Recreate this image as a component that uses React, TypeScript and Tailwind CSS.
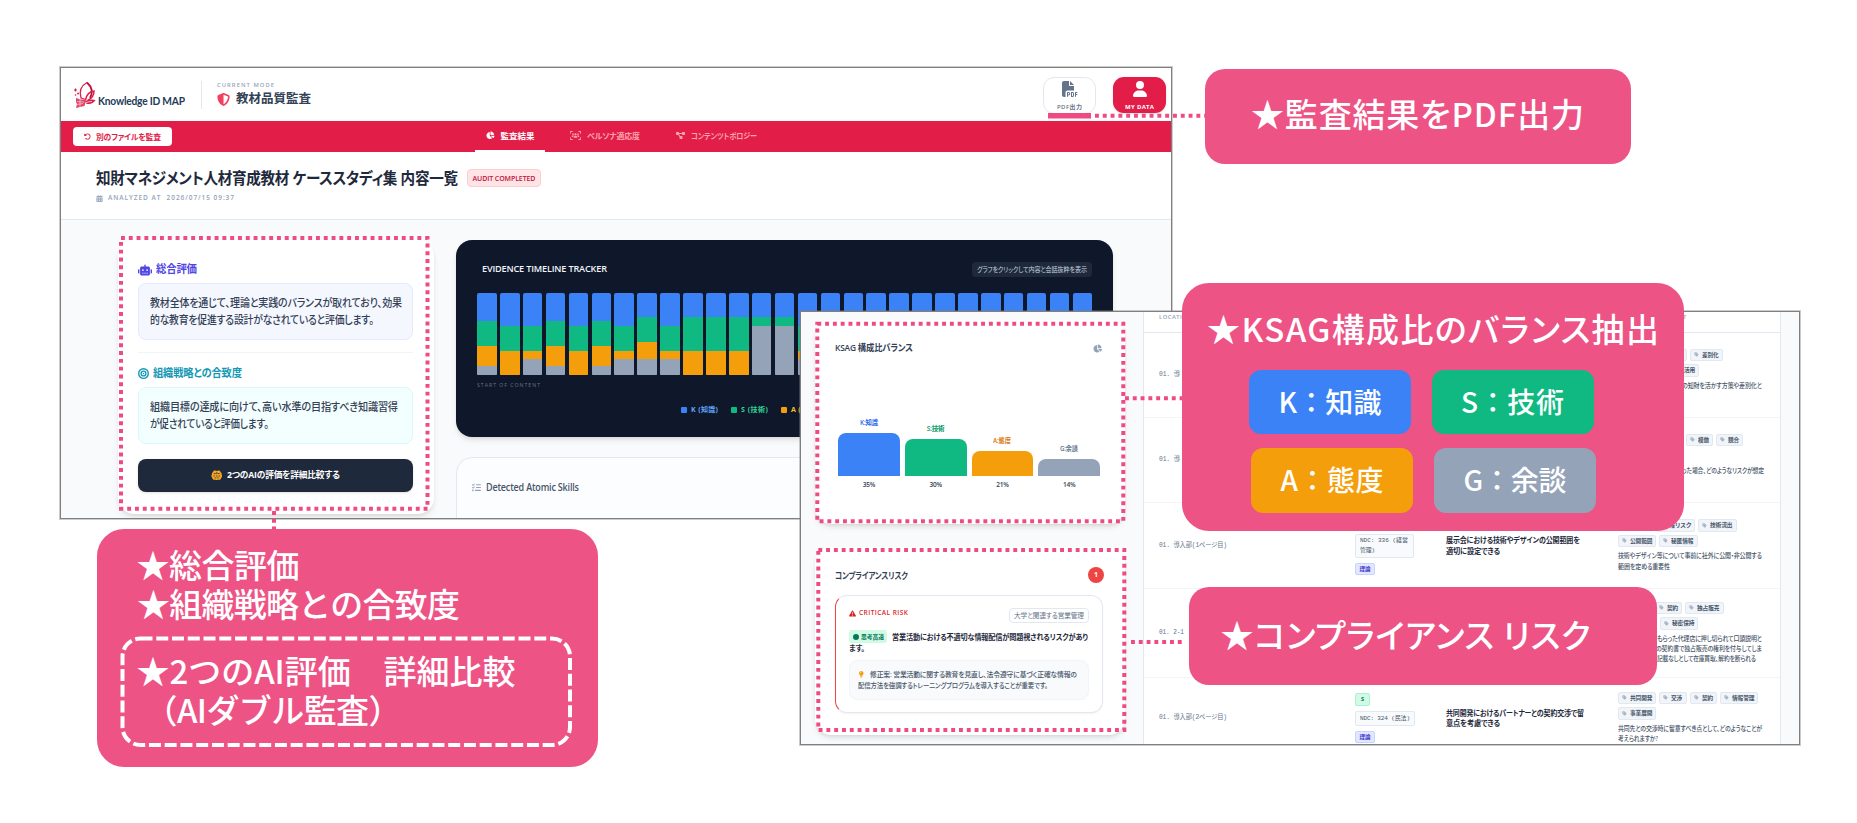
import { useLayoutEffect, useRef, useState } from "react";
import type { ReactNode } from "react";
import {
  FaBullseye,
  FaCalendarDays,
  FaChartPie,
  FaDiagramProject,
  FaFilePdf,
  FaLightbulb,
  FaListCheck,
  FaRobot,
  FaRotateLeft,
  FaShieldHalved,
  FaTag,
  FaTriangleExclamation,
  FaUser,
  FaUsersViewfinder,
} from "react-icons/fa6";

interface FitProps {
  w: number;
  children: string;
  className?: string;
}

// Makes a single line of text span exactly `w` pixels: tracking first,
// then a horizontal squeeze when the tracking would get too tight
const Fit = ({ w, children, className = "" }: FitProps) => {
  const ref = useRef<HTMLSpanElement>(null);
  const [fit, setFit] = useState({ spacing: 0, scale: 1 });

  useLayoutEffect(() => {
    const el = ref.current;
    if (!el) return;
    el.style.letterSpacing = "0px";
    el.style.transform = "none";
    const natural = el.getBoundingClientRect().width;
    const gaps = Math.max(children.length - 1, 1);
    const fontSize = parseFloat(getComputedStyle(el).fontSize);
    const spacing = Math.max((w - natural) / gaps, fontSize * -0.02);
    const scale = Math.min(w / (natural + spacing * gaps), 1);
    el.style.letterSpacing = `${spacing}px`;
    el.style.transform = `scaleX(${scale})`;
    setFit({ spacing, scale });
  }, [w, children]);

  return (
    <span className={`block shrink-0 whitespace-pre ${className}`} style={{ width: w }}>
      <span
        ref={ref}
        className="inline-block origin-left"
        style={{ letterSpacing: fit.spacing, transform: `scaleX(${fit.scale})` }}
      >
        {children}
      </span>
    </span>
  );
};

const Logo = () => (
  <svg viewBox="0 0 24 28" className="h-[28px] w-[24px]" fill="none">
    <path d="M14 1.500C8.500 4.500 6 10 8 17l4.500 1.500" stroke="#d9214e" strokeWidth="1.300" />
    <path d="M14 1.500c5 4.500 6 10 3 15.500" stroke="#b8123c" strokeWidth="1.800" />
    <path d="M12.500 19c1-5 4-8.500 8.500-9 0 4-2 7.500-6.500 9.500" stroke="#e11d48" strokeWidth="1.500" />
    <path d="M12 20c4-1.500 7.500-2 10.500-1-2 3.500-6 5-9.500 3.500" fill="#d9214e" />
    <path d="M12.500 22c2-1 4-1.500 6.500-1.500" stroke="#fff" strokeWidth=".7" />
    <path d="M3 17l5 1.500 5 .5-1.500 6L3 27l1-4-1-2Z" fill="#e2476b" />
    <path d="M4 20.500l7 .5M4 23.500l6-1M7 18v8" stroke="#fff" strokeWidth=".5" />
    <path d="M1 9h3M2.500 7.500v3" stroke="#e11d48" strokeWidth="1.200" />
    <circle cx="5" cy="12.500" r="1" fill="#e11d48" />
    <circle cx="2.500" cy="14" r=".8" fill="#e11d48" />
  </svg>
);

const TwinBrain = ({ className = "" }: { className?: string }) => (
  <svg viewBox="0 0 24 22" className={className} fill="none">
    <path
      d="M9 1C6 .5 4.500 2 4 4.500 1.500 5.500 1.500 8.500 2 9.500 0 11.500.5 15 2.500 16 3 19.500 6 21 9 20.500L12 21l3-.5c3 .5 6-1 6.500-4.500 2-1 2.500-4.500.5-6.500.5-1 .5-4-2-5C19.500 2 18 .5 15 1l-3 1Z"
      fill="currentColor"
    />
    <path d="M6 7.500h4M14 7.500h4M12 4.500v4M5 12.500h3M10.500 12.500h3M16 12.500h3M8 16.500h3M13 16.500h3" stroke="#1e293b" strokeWidth="1.700" />
  </svg>
);

const Header = () => (
  <header className="flex h-[53px] shrink-0 items-start bg-white pl-3">
    <div className="mt-[13px] flex h-[28px] items-start">
      <Logo />
      <Fit w={87} className="mt-[12px] ml-[1px] font-[Lato] text-[11.5px] leading-[16px] font-bold text-[#243a56]">
        Knowledge ID MAP
      </Fit>
      <div className="ml-[16px] h-[28px] w-px bg-[#e2e8f0]" />
    </div>
    <div className="mt-[13px] ml-[15px]">
      <Fit w={57} className="text-[5.8px] leading-[8px] font-semibold text-[#94a3b8]">
        CURRENT MODE
      </Fit>
      <div className="mt-[1px] flex items-center gap-[6px]">
        <FaShieldHalved className="size-[13px] text-[#f43f5e]" />
        <Fit w={75} className="text-[12.5px] leading-[18px] font-bold text-[#334155]">
          教材品質監査
        </Fit>
      </div>
    </div>
    <div className="mt-[9px] mr-[5px] ml-auto flex gap-[17px]">
      <div className="flex h-[37px] w-[53px] flex-col items-center rounded-[11px] border border-[#e2e8f0] pt-[3px]">
        <FaFilePdf className="size-[16px] text-[#64748b]" />
        <Fit w={25} className="mt-[6px] text-[6px] leading-[8px] font-semibold text-[#64748b]">
          PDF出力
        </Fit>
      </div>
      <div className="flex h-[36px] w-[53px] flex-col items-center rounded-[11px] bg-[#e11d48] pt-[4px] shadow-sm">
        <FaUser className="size-[16px] text-white" />
        <Fit w={29} className="mt-[6px] text-[6px] leading-[8px] font-bold text-white">
          MY DATA
        </Fit>
      </div>
    </div>
  </header>
);

const NavBar = () => (
  <nav className="flex h-[31px] shrink-0 items-stretch bg-[#e11d48] pl-[12px] text-[8px] leading-[28px] shadow-sm">
    <div className="mt-[6px] flex h-[19px] w-[99px] items-center rounded bg-white pl-[11px] font-bold text-[#e11d48]">
      <FaRotateLeft className="mr-[5px] size-[7px]" />
      <Fit w={65}>別のファイルを監査</Fit>
    </div>
    <div className="ml-[303px] flex w-[70px] items-center border-b-2 border-white pl-[11px] text-[8.5px] font-bold text-white">
      <FaChartPie className="mr-[6px] size-[8.5px]" />
      <Fit w={34}>監査結果</Fit>
    </div>
    <div className="ml-[25px] flex items-center pb-[2px] font-semibold text-[#fda4af]">
      <FaUsersViewfinder className="mr-[6px] size-[11px]" />
      <Fit w={53}>ペルソナ適応度</Fit>
    </div>
    <div className="ml-[36px] flex items-center pb-[2px] font-semibold text-[#fda4af]">
      <FaDiagramProject className="mr-[6px] size-[9px]" />
      <Fit w={66}>コンテンツトポロジー</Fit>
    </div>
  </nav>
);

const TitleBar = () => (
  <div className="h-[68px] shrink-0 border-b border-[#e2e8f0] bg-white pl-[35px]">
    <div className="flex items-center pt-[15px]">
      <Fit w={362} className="text-[16px] leading-[22px] font-semibold text-[#1e293b]">
        知財マネジメント人材育成教材 ケーススタディ集 内容一覧
      </Fit>
      <div className="ml-[9px] flex h-[18px] w-[74px] items-center justify-center rounded border border-[#fecdd3] bg-[#ffe4e6] text-[#be123c]">
        <Fit w={63} className="text-[7px] leading-none font-semibold">
          AUDIT COMPLETED
        </Fit>
      </div>
    </div>
    <div className="mt-[4px] flex items-center gap-[5px] text-[6.5px] leading-[10px] font-semibold text-[#94a3b8]">
      <FaCalendarDays className="size-[7px]" />
      <Fit w={126}>ANALYZED AT  2026/07/15 09:37</Fit>
    </div>
  </div>
);

const SummaryCard = () => (
  <div className="h-[274px] w-[316px] rounded-2xl bg-white pt-[22px] pr-[21px] pl-[20px] text-[11px] text-[#334155] shadow-md">
    <div className="flex h-[16px] items-center gap-[4px] font-bold text-[#4f46e5]">
      <FaRobot className="size-[14px]" />
      <Fit w={41}>総合評価</Fit>
    </div>
    <div className="mt-[5px] h-[57px] rounded-lg border border-[#e5e9ff] bg-[#f5f7ff] pt-[10px] pl-[11px] leading-[17.5px] font-medium">
      <Fit w={252}>教材全体を通じて、理論と実践のバランスが取れており、効果</Fit>
      <Fit w={224}>的な教育を促進する設計がなされていると評価します。</Fit>
    </div>
    <div className="mt-[12px] h-px bg-[#f1f5f9]" />
    <div className="mt-[13px] flex h-[16px] items-center gap-[4px] font-bold text-[#1598b5]">
      <FaBullseye className="size-[11px]" />
      <Fit w={89}>組織戦略との合致度</Fit>
    </div>
    <div className="mt-[5px] h-[57px] rounded-lg border border-[#d5fafe] bg-[#f3feff] pt-[10px] pl-[11px] leading-[17.5px] font-medium">
      <Fit w={248}>組織目標の達成に向けて、高い水準の目指すべき知識習得</Fit>
      <Fit w={119}>が促されていると評価します。</Fit>
    </div>
    <div className="mt-[15px] flex h-[33px] items-center justify-center gap-[5px] rounded-lg bg-[#1e293b] font-bold text-white shadow">
      <TwinBrain className="h-[10.500px] w-[11.500px] text-[#f5a623]" />
      <Fit w={113} className="text-[9px]">
        2つのAIの評価を詳細比較する
      </Fit>
    </div>
  </div>
);

// K / S / A / G share of every content block, in percent
const MIX_A = [34, 31, 24, 11];
const MIX_B = [40, 30, 30, 0];
const MIX_C = [40, 30, 10, 20];
const MIX_D = [30, 40, 30, 0];
const MIX_E = [30, 10, 0, 60];
const MIX_F = [30, 30, 20, 20];
const TIMELINE = [
  MIX_A, MIX_B, MIX_C, MIX_A, MIX_B, MIX_A, MIX_C, MIX_F, MIX_C,
  MIX_D, MIX_D, MIX_D, MIX_E, MIX_E, MIX_C, MIX_B, MIX_C, MIX_A,
  MIX_B, MIX_C, MIX_A, MIX_B, MIX_C, MIX_B, MIX_A, MIX_C, MIX_B,
];
const KSAG_COLORS = ["bg-[#3b82f6]", "bg-[#10b981]", "bg-[#f59e0b]", "bg-[#94a3b8]"];

const LEGEND = [
  { label: "K (知識)", dot: "bg-[#3b82f6]", text: "text-[#60a5fa]" },
  { label: "S (技術)", dot: "bg-[#10b981]", text: "text-[#34d399]" },
  { label: "A (態度)", dot: "bg-[#f59e0b]", text: "text-[#fbbf24]" },
];

const TimelineCard = () => (
  <div className="h-[197px] rounded-2xl bg-[#0f172a] px-[21px] pt-[22px] shadow-md">
    <div className="flex h-[15px] items-center justify-between pl-[5px]">
      <Fit w={125} className="text-[9.5px] leading-none font-semibold text-[#f1f5f9]">
        EVIDENCE TIMELINE TRACKER
      </Fit>
      <div className="flex h-[15px] w-[120px] items-center justify-center rounded-sm bg-[#1e293b]">
        <Fit w={110} className="text-[7px] leading-none text-[#cbd5e1]">
          グラフをクリックして内容と会話抜粋を表示
        </Fit>
      </div>
    </div>
    <div className="mt-[16px] flex h-[83px] gap-[3.3px]">
      {TIMELINE.map((mix, i) => (
        <div key={i} className="flex flex-1 flex-col overflow-hidden rounded-[2px]">
          {mix.map((share, k) => (
            <div key={k} className={KSAG_COLORS[k]} style={{ height: `${share}%` }} />
          ))}
        </div>
      ))}
    </div>
    <Fit w={63} className="mt-[5px] text-[5.2px] leading-[8px] text-[#64748b]">
      START OF CONTENT
    </Fit>
    <div className="mt-[16px] ml-[204px] flex gap-[13px]">
      {LEGEND.map((item) => (
        <div key={item.label} className="flex items-center gap-[4px]">
          <div className={`size-[6px] rounded-[1px] ${item.dot}`} />
          <Fit w={27} className={`text-[7px] leading-[10px] font-bold ${item.text}`}>
            {item.label}
          </Fit>
        </div>
      ))}
    </div>
  </div>
);

const AuditWindow = () => (
  <section className="absolute top-[67px] left-[60px] flex h-[452px] w-[1112px] flex-col overflow-hidden border border-[#7f7f7f] bg-[#f8fafc] outline outline-[#7f7f7f]/40">
    <Header />
    <NavBar />
    <TitleBar />
    <div className="flex pt-[19.5px] pl-[57px]">
      <SummaryCard />
      <div className="ml-[22px] w-[657px]">
        <TimelineCard />
        <div className="mt-[20px] flex h-[100px] gap-[5px] rounded-2xl border border-[#e2e8f0] bg-[#fcfdfe] px-[15px] pt-[22px]">
          <FaListCheck className="mt-[3px] size-[9px] text-[#94a3b8]" />
          <Fit w={93} className="text-[10px] leading-[14px] font-semibold text-[#475569]">
            Detected Atomic Skills
          </Fit>
        </div>
      </div>
    </div>
  </section>
);

const BALANCE = [
  { label: "K:知識", value: 35, bar: "h-[43px] bg-[#3b82f6]", text: "text-[#2563eb]" },
  { label: "S:技術", value: 30, bar: "h-[37px] bg-[#10b981]", text: "text-[#059669]" },
  { label: "A:態度", value: 21, bar: "h-[25.5px] bg-[#f59e0b]", text: "text-[#d97706]" },
  { label: "G:余談", value: 14, bar: "h-[17px] bg-[#94a3b8]", text: "text-[#64748b]" },
];

const BalanceCard = () => (
  <div className="h-[204px] rounded-2xl bg-white px-[20px] pt-[20px] shadow-md">
    <div className="flex h-[16px] items-center justify-between pr-[3px]">
      <Fit w={78} className="text-[9.5px] leading-none font-semibold text-[#334155]">
        KSAG 構成比バランス
      </Fit>
      <FaChartPie className="size-[9px] text-[#94a3b8]" />
    </div>
    <div className="flex h-[120px] items-end gap-[5px] pr-[5px] pl-[3px]">
      {BALANCE.map((item) => (
        <div key={item.label} className="flex flex-1 flex-col items-center">
          <Fit w={18} className={`mb-[5px] text-[6.5px] leading-[10px] font-semibold ${item.text}`}>
            {item.label}
          </Fit>
          <div className={`w-full rounded-t-lg ${item.bar}`} />
        </div>
      ))}
    </div>
    <div className="mt-[4px] flex gap-[5px] pr-[5px] pl-[3px] text-center text-[6.5px] leading-[10px] font-semibold text-[#334155]">
      {BALANCE.map((item) => (
        <span key={item.label} className="flex-1 tracking-[-0.3px]">
          {item.value}%
        </span>
      ))}
    </div>
  </div>
);

const RiskCard = () => (
  <div className="mt-[23px] h-[188px] rounded-2xl bg-white pt-[20px] pr-[22px] pl-[20px] shadow-md">
    <div className="-mr-[1px] flex h-[16px] items-center justify-between">
      <Fit w={73} className="text-[9px] leading-none font-semibold text-[#334155]">
        コンプライアンスリスク
      </Fit>
      <span className="flex size-[16px] items-center justify-center rounded-full bg-[#ef4444] text-[7px] font-bold text-white">
        1
      </span>
    </div>
    <div className="mt-[12px] h-[118px] rounded-xl border border-[#e2e8f0] border-l-[#ef4444] bg-white px-[13px] pt-[12px] shadow-xs">
      <div className="flex items-start justify-between">
        <div className="mt-[1px] flex items-center gap-[3px] text-[#dc2626]">
          <FaTriangleExclamation className="size-[7px]" />
          <Fit w={49} className="text-[6.5px] leading-[8px] font-semibold">
            CRITICAL RISK
          </Fit>
        </div>
        <div className="flex h-[15px] w-[80px] items-center justify-center rounded-sm border border-[#e2e8f0]">
          <Fit w={70} className="text-[7px] leading-none text-[#64748b]">
            大学と関連する営業管理
          </Fit>
        </div>
      </div>
      <div className="mt-[7px] flex items-center text-[7.5px] leading-[12px] font-bold text-[#1e293b]">
        <div className="mr-[5px] flex h-[13px] w-[38px] items-center gap-[2px] rounded-[3px] bg-[#d1fae5] pl-[4px] text-[#047857]">
          <span className="size-[6px] rounded-full bg-[#047857]" />
          <Fit w={23} className="text-[6px] leading-none">
            思考高速
          </Fit>
        </div>
        <Fit w={196}>営業活動における不適切な情報配信が問題視されるリスクがあり</Fit>
      </div>
      <Fit w={16} className="text-[7.5px] leading-[11px] font-bold text-[#1e293b]">
        ます。
      </Fit>
      <div className="mt-[6px] h-[40px] rounded-lg border border-[#f1f5f9] bg-[#f8fafc] pt-[8px] pl-[8px] text-[7px] leading-[11px] font-medium text-[#475569]">
        <div className="flex items-center gap-[5px]">
          <FaLightbulb className="size-[6.5px] text-[#f59e0b]" />
          <Fit w={207}>修正案: 営業活動に関する教育を見直し、法令遵守に基づく正確な情報の</Fit>
        </div>
        <Fit w={190}>配信方法を強調するトレーニングプログラムを導入することが重要です。</Fit>
      </div>
    </div>
  </div>
);

interface TagProps {
  label: string;
}

const Tag = ({ label }: TagProps) => (
  <span className="flex h-[12.5px] items-center gap-[3px] rounded-[2px] border border-[#e2e8f0] bg-[#f1f5f9] px-[3px] text-[#475569]">
    <FaTag className="size-[5px] text-[#a9b6c8]" />
    <Fit w={label.length * 5.6} className="text-[6px] leading-none font-semibold">
      {label}
    </Fit>
  </span>
);

interface Line {
  text: string;
  width: number;
  indent?: string;
}

interface Row {
  height: string;
  location: string;
  locationWidth: number;
  field?: Line[];
  skill?: Line[];
  tags: { indent: string; labels: string[] }[];
  context: Line[];
}

const ROWS: Row[] = [
  {
    height: "h-[85px]",
    location: "01. 導",
    locationWidth: 21,
    tags: [
      { indent: "pl-[53px]", labels: ["", "差別化"] },
      { indent: "pl-[54px]", labels: ["活用"] },
    ],
    context: [{ text: "の知財を活かす方策や差別化と", width: 80, indent: "ml-[64px]" }],
  },
  {
    height: "h-[85px]",
    location: "01. 導",
    locationWidth: 21,
    tags: [
      { indent: "pl-[68px]", labels: ["模倣", "競合"] },
      { indent: "pl-[10px]", labels: [""] },
    ],
    context: [{ text: "った場合、どのようなリスクが想定", width: 82, indent: "ml-[64px]" }],
  },
  {
    height: "h-[86px]",
    location: "01. 導入部(1ページ目)",
    locationWidth: 68,
    field: [
      { text: "NDC: 336 (経営", width: 48 },
      { text: "管理)", width: 15 },
    ],
    skill: [
      { text: "展示会における技術やデザインの公開範囲を", width: 134 },
      { text: "適切に設定できる", width: 54 },
    ],
    tags: [
      { indent: "pl-[39px]", labels: ["報リスク", "技術流出"] },
      { indent: "pl-0", labels: ["公開範囲", "秘匿情報"] },
    ],
    context: [
      { text: "技術やデザイン等について事前に社外に公開・非公開する", width: 144 },
      { text: "範囲を定める重要性", width: 52 },
    ],
  },
  {
    height: "h-[89px]",
    location: "01. 2-1",
    locationWidth: 25,
    tags: [
      { indent: "pl-[37px]", labels: ["契約", "独占販売"] },
      { indent: "pl-[42px]", labels: ["秘密保持"] },
    ],
    context: [
      { text: "もらった代理店に押し切られて口頭説明と", width: 105, indent: "ml-[39px]" },
      { text: "の契約書で独占販売の権利を付与してしま", width: 106, indent: "ml-[38px]" },
      { text: "記載なしとして在庫買取、解約を断られる", width: 99, indent: "ml-[39px]" },
    ],
  },
  {
    height: "h-[81px]",
    location: "01. 導入部(2ページ目)",
    locationWidth: 68,
    field: [{ text: "NDC: 324 (民法)", width: 50 }],
    skill: [
      { text: "共同開発におけるパートナーとの契約交渉で留", width: 138 },
      { text: "意点を考慮できる", width: 54 },
    ],
    tags: [
      { indent: "pl-0", labels: ["共同開発", "交渉", "契約", "情報管理"] },
      { indent: "pl-0", labels: ["事業展開"] },
    ],
    context: [
      { text: "共同先との交渉時に留意すべき点として、どのようなことが", width: 144 },
      { text: "考えられますか?", width: 40 },
    ],
  },
];

const SkillTable = () => (
  <div className="flex w-[638px] shrink-0 flex-col border-x border-[#e2e8f0] bg-white">
    <div className="flex h-[21px] shrink-0 border-b border-[#e2e8f0] pt-[1px] text-[5.8px] leading-[8px] font-semibold text-[#94a3b8]">
      <Fit w={33} className="ml-[15px]">
        LOCATION
      </Fit>
      <Fit w={4} className="ml-[491px]">
        T
      </Fit>
    </div>
    {ROWS.map((row, i) => (
      <div key={i} className={`flex shrink-0 items-center border-b border-[#f1f5f9] pl-[15px] ${row.height}`}>
        <div className="w-[196px] shrink-0">
          <Fit
            w={row.locationWidth}
            className="font-['Liberation_Mono','Noto_Sans_CJK_JP',monospace] text-[6.5px] leading-[10px] text-[#64748b]"
          >
            {row.location}
          </Fit>
        </div>
        <div className="flex w-[91px] shrink-0 flex-col items-start gap-[5px]">
          {row.field && (
            <>
              <span className="flex h-[13px] w-[15px] items-center justify-center rounded-[2px] border border-[#a7f3d0] bg-[#d1fae5] text-[5.5px] font-bold text-[#047857]">
                {i === ROWS.length - 1 ? "S" : ""}
              </span>
              <div className="min-w-[59px] rounded-[2px] border border-[#e2e8f0] bg-[#f8fafc] px-[4px] py-[1.5px] font-['Liberation_Mono','Noto_Sans_CJK_JP',monospace] text-[6px] leading-[9.5px] text-[#475569]">
                {row.field.map((line) => (
                  <Fit key={line.text} w={line.width}>
                    {line.text}
                  </Fit>
                ))}
              </div>
              <span className="flex h-[12.5px] w-[20px] items-center justify-center rounded-[2px] border border-[#c7d2fe] bg-[#e0e7ff] text-[5.5px] font-bold text-[#4338ca]">
                理論
              </span>
            </>
          )}
        </div>
        <div className="w-[172px] shrink-0 text-[7.5px] leading-[10.3px] font-bold text-[#1e293b]">
          {row.skill?.map((line) => (
            <Fit key={line.text} w={line.width}>
              {line.text}
            </Fit>
          ))}
        </div>
        <div>
          <div className="flex flex-col gap-[3px]">
            {row.tags.map((line, k) => (
              <div key={k} className={`flex gap-[3px] ${line.indent}`}>
                {line.labels.map((label) => (
                  <Tag key={label} label={label} />
                ))}
              </div>
            ))}
          </div>
          <div className="mt-[4px] min-h-[20.6px] text-[7px] leading-[10.3px] font-medium text-[#475569]">
            {row.context.map((line) => (
              <Fit key={line.text} w={line.width} className={line.indent}>
                {line.text}
              </Fit>
            ))}
          </div>
        </div>
      </div>
    ))}
  </div>
);

const DetailWindow = () => (
  <section className="absolute top-[311px] left-[800px] flex h-[434px] w-[1000px] overflow-hidden border border-[#7f7f7f] bg-[#f8fafc] outline outline-[#7f7f7f]/40">
    <div className="mr-[18px] ml-[14px] w-[310px] shrink-0 pt-[8px]">
      <BalanceCard />
      <RiskCard />
    </div>
    <SkillTable />
  </section>
);

interface CalloutProps {
  className: string;
  children: ReactNode;
}

const Callout = ({ className, children }: CalloutProps) => (
  <aside
    className={`absolute bg-[#ed5385] font-['Noto_Sans_CJK_JP',sans-serif] text-[33px] font-medium text-white ${className}`}
  >
    {children}
  </aside>
);

const CHIPS = [
  { label: "K：知識", color: "bg-[#3b82f6]", offset: "ml-0" },
  { label: "S：技術", color: "bg-[#10b981]", offset: "ml-[20.500px]" },
  { label: "A：態度", color: "bg-[#f59e0b]", offset: "ml-[2px]" },
  { label: "G：余談", color: "bg-[#94a3b8]", offset: "ml-[23px]" },
];

const Annotations = () => (
  <svg
    viewBox="0 0 1857 823"
    className="pointer-events-none absolute inset-0 h-[823px] w-[1857px]"
    fill="none"
    stroke="#ee4b83"
    strokeWidth="4"
    strokeDasharray="3.900 3.900"
  >
    <rect x="121" y="238" width="306.500" height="270.700" />
    <rect x="817.300" y="323.700" width="306" height="197.600" />
    <rect x="818.300" y="550" width="306" height="180" />
    <path d="M274 511V530" />
    <path d="M1125 398.300H1183" />
    <path d="M1131 642H1183" />
    <path d="M1095 115.800H1206" />
    <path d="M1048 115.800H1091" strokeWidth="5.500" strokeDasharray="none" />
  </svg>
);

const App = () => {
  return (
    <main className="relative h-[823px] w-[1857px] overflow-hidden bg-white font-['Open_Sans','Noto_Sans_CJK_JP',sans-serif] [font-feature-settings:'palt']">
      <AuditWindow />
      <DetailWindow />
      <Annotations />

      <Callout className="top-[68.5px] left-[1205px] flex h-[95px] w-[425.5px] items-center rounded-[20px] pb-[4px] pl-[46px]">
        <Fit w={333}>★監査結果をPDF出力</Fit>
      </Callout>

      <Callout className="top-[529px] left-[96.5px] h-[238px] w-[501.5px] rounded-[27px] pt-[16px] pl-[40px] leading-[38.5px] [font-feature-settings:normal]">
        <Fit w={163}>★総合評価</Fit>
        <Fit w={323}>★組織戦略との合致度</Fit>
        <div className="mt-[29px]">
          <Fit w={379}>★2つのAI評価　詳細比較</Fit>
          <Fit w={257} className="ml-[8px]">
            （AIダブル監査）
          </Fit>
        </div>
        <svg className="absolute top-[106px] left-[22px] h-[114px] w-[456px]" fill="none">
          <rect x="3.500" y="3.500" width="447.500" height="106.500" rx="18" stroke="#fff" strokeWidth="4" strokeDasharray="12 3.750" />
        </svg>
      </Callout>

      <Callout className="top-[282.5px] left-[1182px] h-[248px] w-[501.5px] rounded-[27px] pt-[21px]">
        <Fit w={452} className="ml-[25px] leading-[48px]">
          ★KSAG構成比のバランス抽出
        </Fit>
        <div className="mt-[18px] ml-[67px] grid w-[350px] grid-cols-[162px_184px] gap-y-[14px] text-[28px] leading-none [font-feature-settings:normal]">
          {CHIPS.map((chip) => (
            <div
              key={chip.label}
              className={`flex h-[64.5px] w-[162px] items-center justify-center rounded-xl pb-[2px] ${chip.color} ${chip.offset}`}
            >
              <Fit w={103}>{chip.label}</Fit>
            </div>
          ))}
        </div>
      </Callout>

      <Callout className="top-[587px] left-[1188.5px] flex h-[98px] w-[468px] items-center rounded-[20px] pb-[2px] pl-[32px]">
        <Fit w={370}>★コンプライアンス リスク</Fit>
      </Callout>
    </main>
  );
};

export default App;
